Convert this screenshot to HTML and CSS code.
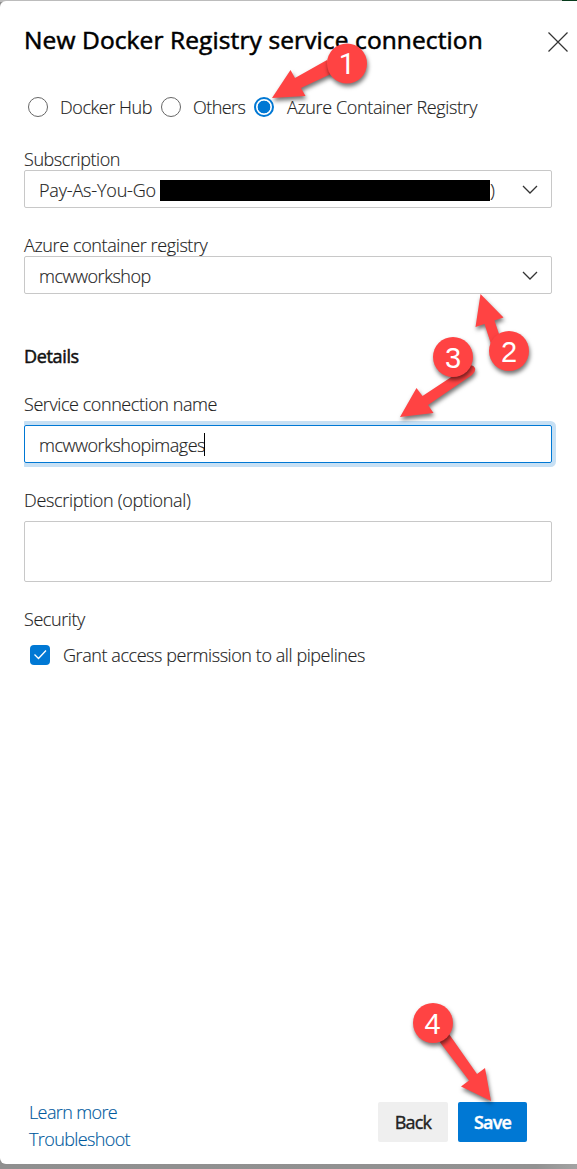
FILE: index.html
```html
<!DOCTYPE html>
<html lang="en">
<head>
<meta charset="utf-8">
<title>New Docker Registry service connection</title>
<link rel="stylesheet" href="styles.css">
</head>
<body>
<div class="backdrop">
<main class="panel">
  <header class="header">
    <h1 class="title">New Docker Registry service connection</h1>
    <svg class="close" viewBox="0 0 20 20"><path d="M.5 .5l19 19M19.5 .5l-19 19"/></svg>
  </header>
  <div class="radios">
    <span class="radio"></span><span class="radio-label hub">Docker Hub</span>
    <span class="radio"></span><span class="radio-label others">Others</span>
    <span class="radio checked"></span><span class="radio-label acr">Azure Container Registry</span>
  </div>
  <section class="field">
    <div class="label subscription">Subscription</div>
    <div class="box"><span class="payg">Pay-As-You-Go</span><span class="redacted"></span><span class="paren">)</span>
      <svg class="chevron" viewBox="0 0 16 10"><path d="M1 1l7 7 7-7"/></svg></div>
  </section>
  <section class="field registry">
    <div class="label registry-label">Azure container registry</div>
    <div class="box"><span class="workshop">mcwworkshop</span>
      <svg class="chevron" viewBox="0 0 16 10"><path d="M1 1l7 7 7-7"/></svg></div>
  </section>
  <h2 class="details">Details</h2>
  <section class="field name">
    <div class="label name-label">Service connection name</div>
    <div class="box focused"><span class="images">mcwworkshopimages</span><span class="caret"></span></div>
  </section>
  <section class="field description">
    <div class="label description-label">Description (optional)</div>
    <div class="box area"></div>
  </section>
  <div class="label security">Security</div>
  <div class="grant">
    <span class="checkbox"><svg viewBox="0 0 20 20"><path d="M4.5 9.5l4 4 7.500-8"/></svg></span>
    <span class="grant-label">Grant access permission to all pipelines</span>
  </div>
  <footer class="footer">
    <div class="links"><a class="learn">Learn more</a><a class="trouble">Troubleshoot</a></div>
    <div class="actions"><span class="button back"><span>Back</span></span><span class="button save"><span>Save</span></span></div>
  </footer>
</main>
<svg class="callouts" viewBox="0 0 577 1169">
  <g class="mark"><path d="M272 98L290.500 70l4.500 8L327 60l6 13-32 15 4.500 8z"/></g>
  <circle class="mark" cx="347" cy="63.500" r="20"/>
  <g class="mark"><path d="M480.500 294L503.500 317.500l-9 3L501 340l-10 4-6.500-20-9 3z"/></g>
  <circle class="mark" cx="509" cy="351" r="20"/>
  <g class="mark"><path d="M400 417L416.500 388l6 8L468 366q5-2 7 2 1 4-3 7L428 405l5.500 8z"/></g>
  <circle class="mark" cx="453" cy="357" r="20"/>
  <g class="mark"><path d="M491 1101L461 1086.500l8-6L439 1041l10-7 28 40 8-6z"/></g>
  <circle class="mark" cx="433" cy="1023" r="20"/>
  <text class="one" x="347" y="73.500">1</text><text x="509" y="361.500">2</text><text x="453" y="367.500">3</text><text x="432.500" y="1034">4</text>
</svg>
</div>
</body>
</html>
```
FILE: styles.css
```css
* { box-sizing: border-box; }
body { margin: 0; font-family: "Open Sans", "Noto Sans", sans-serif; font-size: 18px; font-weight: 350; color: #222; letter-spacing: -.43px; }
.backdrop { position: relative; height: 1169px; padding: 1px 0 5px; background: linear-gradient(90deg, #bcbcbc 0 562px, #073b1c 562px) 0 0 / 100% 2px no-repeat, linear-gradient(90deg, #8f8f8f, #929292 93%, #a3a3a3); overflow: hidden; }
.panel { display: flex; flex-direction: column; height: 1163px; padding: 24px 25px 22px 24px; background: #fff; border-radius: 6px 0 0 6px; line-height: 20px; white-space: nowrap; -webkit-text-stroke: .15px; }
.header { display: flex; justify-content: space-between; height: 32px; margin-right: -16px; }
.title { margin: 0; font-size: 24.500px; line-height: 30px; font-weight: 400; color: #000; letter-spacing: .11px; -webkit-text-stroke: .55px #000; }
.close { width: 20px; height: 20px; margin-top: 7px; fill: none; stroke: #333; stroke-width: 1.200; }
.radios { display: flex; align-items: center; height: 24px; margin-top: 38px; padding-left: 4px; }
.radio { width: 20px; height: 20px; flex: none; border: 1px solid #666; border-radius: 50%; }
.radio.checked { border: 2px solid #0078d4; background: radial-gradient(circle, #0078d4 6px, #fff 6.700px); }
.radio-label { margin-left: 12px; }
.hub { width: 101px; }
.others { width: 61px; letter-spacing: -.55px; }
.acr { margin-left: 13px; letter-spacing: -.38px; }
.field { display: flex; flex-direction: column; gap: 1px; margin-top: 30px; }
.label { height: 20px; }
.registry-label { letter-spacing: -.39px; }
.description-label { letter-spacing: -.3px; }
.box { display: flex; align-items: center; height: 38px; padding: 2px 13px 0 14px; border: 1px solid #c8c8c8; border-radius: 2px; }
.redacted { width: 330px; height: 21px; background: #000; }
.payg { width: 121px; letter-spacing: -.17px; }
.workshop, .images { letter-spacing: -.48px; }
.chevron { width: 16px; height: 10px; margin: -1px 0 0 auto; fill: none; stroke: #333; stroke-width: 1.300; }
.registry { margin-top: 27px; }
.details { margin: 52px 0 0; font-size: 18px; line-height: 20px; font-weight: 400; color: #111; letter-spacing: -.35px; -webkit-text-stroke: .5px; }
.name { margin-top: 28px; gap: 11px; }
.focused { border-color: #0078d4; box-shadow: 0 0 0 4px #c7e0f4; clip-path: inset(-4px -4px -4px 0); }
.caret { width: 1px; height: 23px; margin: -2px 0 0 -1px; background: #000; }
.description { margin-top: 27px; gap: 11px; }
.area { height: 61px; }
.security { margin-top: 27px; }
.grant { display: flex; gap: 13px; height: 20px; margin: 16px 0 0 6px; }
.checkbox { width: 20px; height: 20px; border-radius: 4px; background: #0078d4; }
.checkbox svg { display: block; fill: none; stroke: #fff; stroke-width: 1.300; }
.footer { display: flex; justify-content: space-between; height: 44px; margin-top: auto; padding: 0 25px 0 5px; }
.links { display: flex; flex-direction: column; padding-top: 1px; line-height: 27px; color: #005a9e; letter-spacing: -.62px; }
.links a { height: 27px; }
.actions { display: flex; gap: 10px; }
.button { display: flex; align-items: center; justify-content: center; width: 70px; height: 40px; margin-top: 4px; border-radius: 2px; background: #efefef; font-weight: 400; color: #222; letter-spacing: -.8px; -webkit-text-stroke: .4px; }
.save { width: 69px; background: #0078d4; color: #fff; font-weight: 600; }
.callouts { position: absolute; inset: 0; width: 577px; height: 1169px; }
.mark { fill: #ff4343; filter: drop-shadow(1px 3px 2px rgba(0, 0, 0, .55)); }
.callouts text { fill: #fff; font: 400 29px "Liberation Sans", Arial, sans-serif; letter-spacing: 0; text-anchor: middle; }
.callouts .one { font-family: Roboto, sans-serif; }
```
